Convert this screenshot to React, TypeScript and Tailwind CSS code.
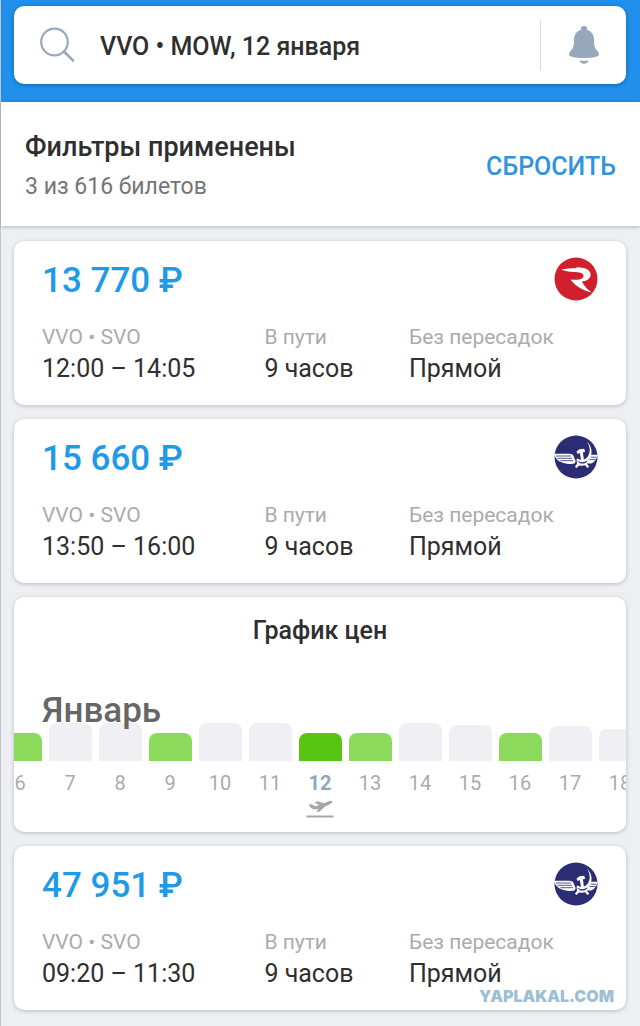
import React, { useState } from 'react';

// ── Types ──────────────────────────────────────────────────────────────────────
type Airline = 'rossiya' | 'aeroflot';

interface Ticket {
  id: string;
  price: string;
  airline: Airline;
  route: string;
  time: string;
  duration: string;
  stops: string;
}

interface DayPrice {
  day: number;
  height: number;
  cheap?: boolean;
}

// ── Data ───────────────────────────────────────────────────────────────────────
const TICKETS: Ticket[] = [
  { id: 't1', price: '13 770 ₽', airline: 'rossiya',  route: 'VVO • SVO', time: '12:00 – 14:05', duration: '9 часов', stops: 'Прямой' },
  { id: 't2', price: '15 660 ₽', airline: 'aeroflot', route: 'VVO • SVO', time: '13:50 – 16:00', duration: '9 часов', stops: 'Прямой' },
  { id: 't3', price: '47 951 ₽', airline: 'aeroflot', route: 'VVO • SVO', time: '09:20 – 11:30', duration: '9 часов', stops: 'Прямой' },
];

const DAYS: DayPrice[] = [
  { day: 6,  height: 28, cheap: true },
  { day: 7,  height: 38 },
  { day: 8,  height: 38 },
  { day: 9,  height: 28, cheap: true },
  { day: 10, height: 38 },
  { day: 11, height: 38 },
  { day: 12, height: 28, cheap: true },
  { day: 13, height: 28, cheap: true },
  { day: 14, height: 38 },
  { day: 15, height: 36 },
  { day: 16, height: 28, cheap: true },
  { day: 17, height: 35 },
  { day: 18, height: 32 },
];

// ── Icons ──────────────────────────────────────────────────────────────────────
const SearchIcon: React.FC = () => (
  <svg viewBox="0 0 36 36" className="w-9 h-9 shrink-0" fill="none" stroke="#9aa9b8" aria-hidden="true">
    <circle cx="14.500" cy="15" r="13.300" strokeWidth="2.2" />
    <path d="M24 24.500 33 33.500" strokeWidth="2.6" strokeLinecap="round" />
  </svg>
);

const BellIcon: React.FC = () => (
  <svg viewBox="0 0 32 40" className="w-8 h-10" fill="#98a8bc" aria-hidden="true">
    <path d="M16 1c-2 0-3.2 1.200-3.200 3v1C8.500 6.300 6 9.800 6 14.500c0 6.500-.7 8.500-3 11C1.800 26.800 1 27.900 1 29.300 1 32 6.500 33 16 33s15-1 15-3.700c0-1.400-.8-2.500-2-3.800-2.300-2.500-3-4.500-3-11 0-4.700-2.500-8.200-6.800-9.500V4c0-1.800-1.200-3-3.200-3z" />
    <path d="M11.500 35.500c1.500.3 7.500.3 9 0-.4 2-2 3.300-4.500 3.300s-4.100-1.300-4.500-3.300z" />
  </svg>
);

const RossiyaLogo: React.FC = () => (
  <svg viewBox="0 0 44 44" className="w-11 h-11" role="img" aria-label="Россия">
    <circle cx="22" cy="22" r="21.500" fill="#d0202e" />
    <path
      d="M7 12.500c5-.9 10-1.100 14.500-1.200 1.200-1.300 3-1.500 4-.7 6.500.2 11.500 2.800 11 7.600-.4 3.700-4 5.900-8.700 6.300 2.500 4.500 5.500 8 9.700 10.800-7.500-1.200-16-6-21-12.800 5 .7 12.500.5 13-3.300.3-3.400-4.500-4.200-9.500-4.200-4.800 0-9-.9-13-2.500z"
      fill="#fff"
    />
  </svg>
);

const AeroflotLogo: React.FC = () => (
  <svg viewBox="0 0 44 44" className="w-11 h-11" role="img" aria-label="Аэрофлот">
    <circle cx="22" cy="22" r="21.500" fill="#2b2c73" />
    {/* wings */}
    <g fill="#fff">
      <path d="M.4 18.800h14.800c3 0 4.500 1.500 5 4l1.500 3.500-1.200 2.200c-2.500.6-5 .6-7.500.2C7 28 2.500 25.500.4 20.500z" />
      <path d="M43.600 19.800h-6.300c-1.500 2.500-2.300 4.500-4.300 6l.5 2.400c1.500.5 3.300.5 4.800-.2 3-1.700 4.800-4.500 5.300-8.200z" />
    </g>
    <g stroke="#2b2c73" strokeWidth=".8" fill="none">
      <path d="M2 21h15M3.500 23.300h14.500M6.500 25.700h12.500M42.500 22.200h-5.500M41.500 24.600h-6" />
    </g>
    {/* sickle, hammer and ribbon */}
    <g fill="#fff">
      <path d="M33 6.500c5.500 5.500 6.200 13.500 1.200 18.200-3.400 3.200-8.400 3.200-12 .3l1.200-1.500c3 1.900 6.700 1.700 9.300-.8 4-3.900 4-10.200.3-16.200z" />
      <path d="m22.500 16.500 3-2.200 4.800-.5.8 3.200-2.200.3 1 7.500-2.800.5-1.300-7.200-2.300.8z" />
      <path d="M22.500 25.500c3.500 3.500 8 3.700 11.500.5l-.8 3 2 2.800-1.800 1.300-2.300-2.800c-2 .6-4 .6-6 .1L22.500 33l-1.600-1.200 2.200-3z" />
    </g>
    <path d="M25 27.500c2 1 4.500 1 6.500 0" stroke="#2b2c73" strokeWidth=".7" fill="none" />
  </svg>
);

const TakeoffIcon: React.FC = () => (
  <svg viewBox="0 0 28 18" className="w-7 h-[18px]" fill="#a6a6aa" aria-hidden="true">
    <path d="M2.800 4.800c1.500-.8 2.900-.7 4.200.2l2.200 1.200 4-1.300-4.700-2.400c1.500-1.100 3-1.300 4.500-.8l5.200 1.500L22.500 1.300c1.700-.7 3.400-.6 4 .2-.6 1.500-2 2.500-4 3.500l-3.700 1.800-4.600 4.300c-1.200.9-2.400 1.100-3.700.9l1.800-3.300-3.200.8C5.500 9.200 4.200 7.500 2.800 4.800z" />
    <path d="M.5 15.500h27v2H.5z" />
  </svg>
);

// ── Ticket card ────────────────────────────────────────────────────────────────
const InfoCell: React.FC<{ label: string; value: string }> = ({ label, value }) => (
  <div className="whitespace-nowrap">
    <dt className="text-[21px] leading-7 text-[#ababab]">{label}</dt>
    <dd className="text-[25px] leading-9 text-[#2f2f2f]">{value}</dd>
  </div>
);

const TicketCard: React.FC<{ ticket: Ticket }> = ({ ticket }) => (
  <article className="bg-white rounded-[10px] shadow-[0_1px_4px_rgba(0,0,0,0.22)] px-7 pt-4 pb-[18px]">
    <div className="flex items-start justify-between">
      <h2 className="text-[35px] leading-12 font-medium text-[#1f9ae6]">{ticket.price}</h2>
      {ticket.airline === 'rossiya' ? <RossiyaLogo /> : <AeroflotLogo />}
    </div>
    <dl className="grid grid-cols-[40%_26%_1fr] mt-[18px]">
      <InfoCell label={ticket.route} value={ticket.time} />
      <InfoCell label="В пути" value={ticket.duration} />
      <InfoCell label="Без пересадок" value={ticket.stops} />
    </dl>
  </article>
);

// ── Price chart ────────────────────────────────────────────────────────────────
const PriceChart: React.FC = () => {
  const [selected, setSelected] = useState(12);

  return (
    <section
      aria-labelledby="chart-heading"
      className="bg-white rounded-[10px] shadow-[0_1px_4px_rgba(0,0,0,0.22)] overflow-hidden pt-4 pb-3"
    >
      <h2 id="chart-heading" className="text-center text-[25px] leading-9 font-medium text-[#2f2f2f]">
        График цен
      </h2>
      <div className="relative mt-[72px]">
        <h3 className="absolute left-7 bottom-full -mb-3.5 text-[35px] leading-12 font-medium text-[#666]">
          Январь
        </h3>
        <div className="flex justify-center gap-[7px]">
          {DAYS.map((d) => {
            const isSelected = d.day === selected;
            const barColor = isSelected ? 'bg-[#56c612]' : d.cheap ? 'bg-[#8bda5c]' : 'bg-[#efeff4]';
            return (
              <button
                key={d.day}
                type="button"
                aria-pressed={isSelected}
                onClick={() => setSelected(d.day)}
                className="w-[43px] shrink-0 flex flex-col items-center"
              >
                <span className="h-10 w-full flex items-end">
                  <span className={`w-full rounded-t-lg ${barColor}`} style={{ height: d.height }} />
                </span>
                <span
                  className={`mt-2 text-[20px] leading-7 ${
                    isSelected ? 'font-bold text-[#96a6ba]' : 'text-[#ababab]'
                  }`}
                >
                  {d.day}
                </span>
                <span className="h-[23px] pt-[3px]">{isSelected && <TakeoffIcon />}</span>
              </button>
            );
          })}
        </div>
      </div>
    </section>
  );
};

// ── Page ───────────────────────────────────────────────────────────────────────
const App: React.FC = () => (
  <div className="relative min-h-screen bg-[#eeeff3] font-['Roboto',sans-serif] border-l border-[#c4c5c9]">
    <header className="bg-[#2190ec] pl-[13px] pr-3.5 pt-1.5 pb-[18px]">
      <div className="h-[78px] flex items-center bg-white rounded-[10px] shadow-[0_1px_5px_rgba(0,0,0,0.3)] px-[26px]">
        <SearchIcon />
        <input
          type="text"
          aria-label="Маршрут и дата"
          defaultValue="VVO • MOW, 12 января"
          className="flex-1 min-w-0 ml-6 pt-1 text-[25px] font-medium text-[#2f2f2f] bg-transparent outline-none"
        />
        <button type="button" aria-label="Уведомления" className="h-[50px] border-l border-[#d5d9de] pl-[27px]">
          <BellIcon />
        </button>
      </div>
    </header>

    <section className="h-[124px] flex items-center justify-between bg-white px-6 pt-1.5 shadow-[0_1px_4px_rgba(0,0,0,0.25)]">
      <div>
        <h1 className="text-[27px] leading-10 font-medium text-[#2f2f2f]">Фильтры применены</h1>
        <p className="text-[23px] leading-10 text-[#757575]">3 из 616 билетов</p>
      </div>
      <button type="button" className="text-[25px] font-medium text-[#2f94dd]">СБРОСИТЬ</button>
    </section>

    <main className="flex flex-col gap-3.5 pl-[13px] pr-3.5 py-[15px]">
      <TicketCard ticket={TICKETS[0]} />
      <TicketCard ticket={TICKETS[1]} />
      <PriceChart />
      <TicketCard ticket={TICKETS[2]} />
    </main>

    {/* site mark over the last card */}
    <span className="absolute right-[26px] bottom-[18px] font-['Inter',sans-serif] font-black text-[16px] leading-6 text-[#9dbfd3]">
      YAPLAKAL.COM
    </span>
  </div>
);

export default App;
